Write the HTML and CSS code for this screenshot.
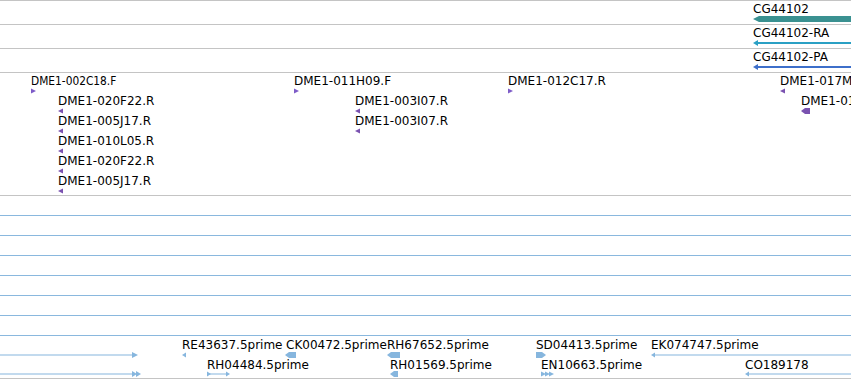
FILE: index.html
```html
<!DOCTYPE html>
<html>
<head>
<meta charset="utf-8">
<link rel="stylesheet" href="styles.css">
</head>
<body>
<div class="view">
  <div class="track t-gene">
    <div class="row">
      <div class="feat" style="left:753px"><span class="lbl">CG44102</span>
        <svg class="glyph" width="100" height="6"><polygon class="gene" points="0,3 6,0 100,0 100,6 6,6"/></svg></div>
    </div>
  </div>
  <div class="track t-gene">
    <div class="row">
      <div class="feat" style="left:753px"><span class="lbl">CG44102-RA</span>
        <svg class="glyph" width="100" height="6"><polygon class="ra" points="0,3 5,0 5,6"/><rect class="ra" x="4" y="2" width="96" height="2"/></svg></div>
    </div>
  </div>
  <div class="track t-gene">
    <div class="row">
      <div class="feat" style="left:753px"><span class="lbl">CG44102-PA</span>
        <svg class="glyph" width="100" height="6"><polygon class="pa" points="0,3 5,0 5,6"/><rect class="pa" x="4" y="2" width="96" height="2"/></svg></div>
    </div>
  </div>
  <div class="track t-bac">
    <div class="row">
      <div class="feat" style="left:31px"><span class="lbl squeeze">DME1-002C18.F</span>
        <svg class="glyph" width="6" height="6"><polygon class="bac-f" points="0,0.5 5,3 0,5.5"/></svg></div>
      <div class="feat" style="left:294px"><span class="lbl">DME1-011H09.F</span>
        <svg class="glyph" width="6" height="6"><polygon class="bac-f" points="0,0.5 5,3 0,5.5"/></svg></div>
      <div class="feat" style="left:508px"><span class="lbl">DME1-012C17.R</span>
        <svg class="glyph" width="6" height="6"><polygon class="bac-f" points="0,0.5 5,3 0,5.5"/></svg></div>
      <div class="feat" style="left:780px"><span class="lbl">DME1-017M13.R</span>
        <svg class="glyph" width="6" height="6"><polygon class="bac" points="0,3 5,0.5 5,5.5"/></svg></div>
    </div>
    <div class="row">
      <div class="feat" style="left:58px"><span class="lbl">DME1-020F22.R</span>
        <svg class="glyph" width="6" height="6"><polygon class="bac" points="0,3 5,0.5 5,5.5"/></svg></div>
      <div class="feat" style="left:355px"><span class="lbl">DME1-003I07.R</span>
        <svg class="glyph" width="6" height="6"><polygon class="bac" points="0,3 5,0.5 5,5.5"/></svg></div>
      <div class="feat" style="left:801px"><span class="lbl">DME1-017M13.R</span>
        <svg class="glyph" width="10" height="6"><polygon class="bac" points="0,3 4,0 9,0 9,6 4,6"/></svg></div>
    </div>
    <div class="row">
      <div class="feat" style="left:58px"><span class="lbl">DME1-005J17.R</span>
        <svg class="glyph" width="6" height="6"><polygon class="bac" points="0,3 5,0.5 5,5.5"/></svg></div>
      <div class="feat" style="left:355px"><span class="lbl">DME1-003I07.R</span>
        <svg class="glyph" width="6" height="6"><polygon class="bac" points="0,3 5,0.5 5,5.5"/></svg></div>
    </div>
    <div class="row">
      <div class="feat" style="left:58px"><span class="lbl">DME1-010L05.R</span>
        <svg class="glyph" width="6" height="6"><polygon class="bac" points="0,3 5,0.5 5,5.5"/></svg></div>
    </div>
    <div class="row">
      <div class="feat" style="left:58px"><span class="lbl">DME1-020F22.R</span>
        <svg class="glyph" width="6" height="6"><polygon class="bac" points="0,3 5,0.5 5,5.5"/></svg></div>
    </div>
    <div class="row">
      <div class="feat" style="left:58px"><span class="lbl">DME1-005J17.R</span>
        <svg class="glyph" width="6" height="6"><polygon class="bac" points="0,3 5,0.5 5,5.5"/></svg></div>
    </div>
  </div>
  <div class="track t-est">
    <div class="row"><div class="span-line"></div></div>
    <div class="row"><div class="span-line"></div></div>
    <div class="row"><div class="span-line"></div></div>
    <div class="row"><div class="span-line"></div></div>
    <div class="row"><div class="span-line"></div></div>
    <div class="row"><div class="span-line"></div></div>
    <div class="row"><div class="span-line"></div></div>
    <div class="row">
      <div class="feat" style="left:0px">
        <svg class="glyph" width="140" height="6"><rect class="est" x="0" y="2.5" width="134" height="1"/><polygon class="est" points="132,0 138,3 132,6"/></svg></div>
      <div class="feat" style="left:182px"><span class="lbl">RE43637.5prime</span>
        <svg class="glyph" width="6" height="6"><polygon class="est" points="0,3 4,0.5 4,5.5"/></svg></div>
      <div class="feat" style="left:285px"><span class="lbl nudge">CK00472.5prime</span>
        <svg class="glyph" width="12" height="6"><polygon class="est" points="0,3 4,0 11,0 11,6 4,6"/></svg></div>
      <div class="feat" style="left:387px"><span class="lbl">RH67652.5prime</span>
        <svg class="glyph" width="14" height="6"><polygon class="est" points="0,3 4,0 13,0 13,6 4,6"/></svg></div>
      <div class="feat" style="left:536px"><span class="lbl">SD04413.5prime</span>
        <svg class="glyph" width="11" height="6"><polygon class="est" points="0,0 6,0 10,3 6,6 0,6"/></svg></div>
      <div class="feat" style="left:651px"><span class="lbl">EK074747.5prime</span>
        <svg class="glyph" width="200" height="6"><polygon class="est" points="0,3 4,0.5 4,5.5"/><rect class="est" x="3" y="2.5" width="197" height="1"/></svg></div>
    </div>
    <div class="row row-last">
      <div class="feat" style="left:0px">
        <svg class="glyph" width="142" height="6"><rect class="est" x="0" y="2.5" width="134" height="1"/><polygon class="est" points="132,0 137,3 132,6"/><polygon class="est" points="136,0 141,3 136,6"/></svg></div>
      <div class="feat" style="left:207px"><span class="lbl">RH04484.5prime</span>
        <svg class="glyph" width="24" height="6"><polygon class="est" points="0,0.5 4,3 0,5.5"/><rect class="est" x="0" y="2.5" width="20" height="1"/><polygon class="est" points="19,0.5 23,3 19,5.5"/></svg></div>
      <div class="feat" style="left:390px"><span class="lbl">RH01569.5prime</span>
        <svg class="glyph" width="9" height="6"><polygon class="est" points="0,3 4,0 8,0 8,6 4,6"/></svg></div>
      <div class="feat" style="left:541px"><span class="lbl">EN10663.5prime</span>
        <svg class="glyph" width="14" height="6"><polygon class="est" points="0,0.5 5,3 0,5.5"/><polygon class="est" points="4,0.5 9,3 4,5.5"/><polygon class="est" points="8,0.5 13,3 8,5.5"/></svg></div>
      <div class="feat" style="left:745px"><span class="lbl">CO189178</span>
        <svg class="glyph" width="106" height="6"><polygon class="est" points="0,3 4,0.5 4,5.5"/><rect class="est" x="3" y="2.5" width="103" height="1"/></svg></div>
    </div>
  </div>
</div>
</body>
</html>
```

FILE: styles.css
```css
html, body {
  margin: 0;
  padding: 0;
  background: #ffffff;
}
body {
  width: 851px;
  height: 380px;
  overflow: hidden;
  font-family: "DejaVu Sans", sans-serif;
  font-size: 12px;
  color: #000000;
}
.view {
  display: flex;
  flex-direction: column;
  border-top: 1px solid #c4c4c4;
  width: 851px;
  overflow: hidden;
}
.track {
  border-bottom: 1px solid #c4c4c4;
  overflow: hidden;
  display: flex;
  flex-direction: column;
}
.t-gene { height: 23px; }
.t-bac { height: 122px; }
.t-est { height: 183px; padding-top: 1px; box-sizing: border-box; }
.row {
  position: relative;
  height: 20px;
  flex: none;
}
.feat {
  position: absolute;
  top: 0;
}
.lbl {
  position: absolute;
  top: 1px;
  left: 0;
  line-height: 14px;
  white-space: nowrap;
}
.lbl.squeeze {
  transform: scaleX(0.885);
  transform-origin: left center;
}
.lbl.nudge {
  left: 1px;
}
.glyph {
  position: absolute;
  top: 15px;
  left: 0;
  display: block;
}
.row-last .glyph {
  top: 14px;
}
.span-line {
  position: absolute;
  left: 0;
  right: 0;
  top: 18px;
  height: 1px;
  background: #8ab8de;
}
.gene { fill: #3a9191; }
.ra { fill: #2aa0c4; }
.pa { fill: #3d6fca; }
.bac { fill: #7a52b0; }
.bac-f { fill: #7e5cc8; }
.est { fill: #86b6de; }
```
